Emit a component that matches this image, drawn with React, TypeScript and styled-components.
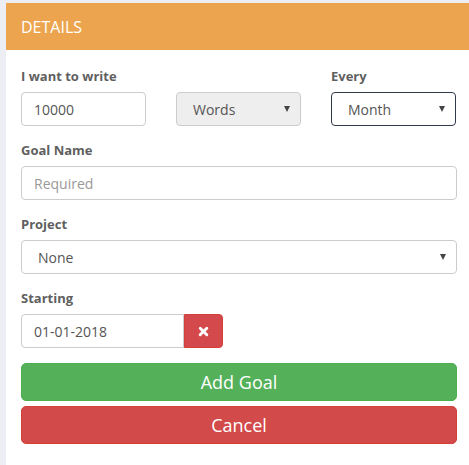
import React from "react";
import styled, { createGlobalStyle } from "styled-components";

const GlobalStyle = createGlobalStyle`
  html, body {
    margin: 0;
    padding: 0;
    background: #eceef3;
    font-family: "Open Sans", "Noto Sans", sans-serif;
    overflow: hidden;
  }
  * {
    box-sizing: border-box;
  }
`;

const Page = styled.div`
  padding: 3px 0 0 6px;
  height: 465px;
`;

const Panel = styled.div`
  width: 466px;
  height: 462px;
  background: #ffffff;
`;

const Header = styled.div`
  height: 47px;
  background: #eca54e;
  color: #ffffff;
  font-size: 16px;
  padding: 0 15px;
  display: flex;
  align-items: center;
`;

const Body = styled.div`
  padding: 17px 15px 0 15px;
  display: flex;
  flex-direction: column;
`;

const Row = styled.div`
  display: grid;
  grid-template-columns: 125px 125px 125px;
  column-gap: 30px;
  margin-bottom: 15px;
`;

const Field = styled.div`
  display: flex;
  flex-direction: column;
  margin-bottom: 15px;
`;

const Label = styled.label<{ $hidden?: boolean }>`
  display: block;
  font-size: 13px;
  font-weight: 700;
  color: #5f5f5f;
  height: 19px;
  line-height: 19px;
  margin-bottom: 6px;
  visibility: ${(p) => (p.$hidden ? "hidden" : "visible")};
`;

const Input = styled.input`
  height: 34px;
  width: 100%;
  padding: 6px 12px;
  font-family: inherit;
  font-size: 14px;
  color: #555;
  border: 1px solid #ccc;
  border-radius: 4px;
  outline: none;
  background: #fff;
  &::placeholder {
    color: #999;
  }
`;

const SelectBox = styled.div<{ $variant?: "disabled" | "focused" }>`
  height: 34px;
  padding: 0 10px 0 16px;
  display: flex;
  align-items: center;
  justify-content: space-between;
  font-size: 14px;
  color: #555;
  border-radius: 4px;
  border: 1px solid
    ${(p) => (p.$variant === "focused" ? "#2f3a4a" : "#ccc")};
  background: ${(p) => (p.$variant === "disabled" ? "#eeeeee" : "#fff")};
`;

const Caret = styled.span`
  width: 0;
  height: 0;
  border-left: 3.5px solid transparent;
  border-right: 3.5px solid transparent;
  border-top: 6px solid #444;
`;

const DateGroup = styled.div`
  display: flex;
  align-items: stretch;
`;

const DateInput = styled(Input)`
  width: 163px;
  border-radius: 4px 0 0 4px;
`;

const ClearButton = styled.button`
  width: 39px;
  height: 34px;
  border: 1px solid #d43f3a;
  border-radius: 0 4px 4px 0;
  background: #d44a4c;
  display: flex;
  align-items: center;
  justify-content: center;
  padding: 0;
`;

const Button = styled.button<{ $tone: "success" | "danger" }>`
  width: 100%;
  height: 38px;
  border-radius: 5px;
  font-family: inherit;
  font-size: 18px;
  color: #fff;
  padding: 0;
  border: 1px solid
    ${(p) => (p.$tone === "success" ? "#4cae4c" : "#d43f3a")};
  background: ${(p) => (p.$tone === "success" ? "#54b15a" : "#d24a4a")};
  margin-bottom: 5px;
`;

const ButtonStack = styled.div`
  display: flex;
  flex-direction: column;
`;

const Times = () => (
  <svg width="11" height="11" viewBox="0 0 10 10">
    <path
      d="M2 2 L8 8 M8 2 L2 8"
      stroke="#fff"
      strokeWidth="2.6"
      strokeLinecap="round"
    />
  </svg>
);

export default function App() {
  return (
    <>
      <GlobalStyle />
      <Page>
        <Panel>
          <Header>DETAILS</Header>
          <Body>
            <Row>
              <div>
                <Label>I want to write</Label>
                <Input defaultValue="10000" />
              </div>
              <div>
                <Label $hidden>Unit</Label>
                <SelectBox $variant="disabled">
                  Words <Caret />
                </SelectBox>
              </div>
              <div>
                <Label>Every</Label>
                <SelectBox $variant="focused">
                  Month <Caret />
                </SelectBox>
              </div>
            </Row>
            <Field>
              <Label>Goal Name</Label>
              <Input placeholder="Required" />
            </Field>
            <Field>
              <Label>Project</Label>
              <SelectBox>
                None <Caret />
              </SelectBox>
            </Field>
            <Field>
              <Label>Starting</Label>
              <DateGroup>
                <DateInput defaultValue="01-01-2018" />
                <ClearButton>
                  <Times />
                </ClearButton>
              </DateGroup>
            </Field>
            <ButtonStack>
              <Button $tone="success">Add Goal</Button>
              <Button $tone="danger">Cancel</Button>
            </ButtonStack>
          </Body>
        </Panel>
      </Page>
    </>
  );
}
